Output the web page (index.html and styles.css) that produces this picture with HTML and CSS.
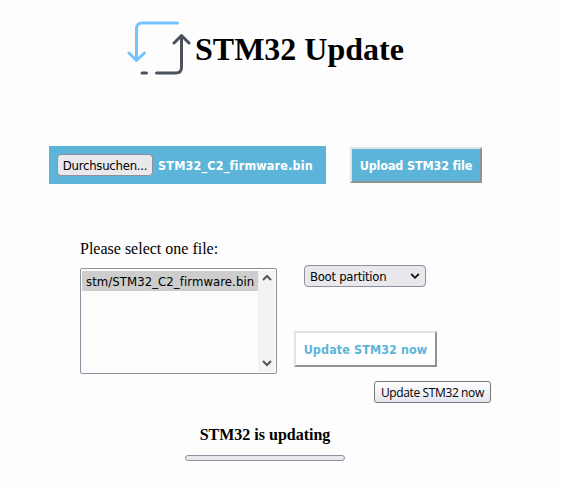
FILE: index.html
```html
<!DOCTYPE html>
<html lang="en">
<head>
<meta charset="utf-8">
<title>STM32 Update</title>
<link rel="stylesheet" href="styles.css">
</head>
<body>
<header class="header">
  <svg class="logo" width="64" height="56" viewBox="0 0 64 56" fill="none" stroke-width="3" stroke-linecap="round" stroke-linejoin="round">
    <path stroke="#74c3ff" d="M50.5 3H15Q9.500 3 9.500 9V40.500M2 33L9.500 40.500L17.500 33"/>
    <path stroke="#4b515d" d="M15 53H19.500M29.500 53H49Q54.500 53 54.500 47V15.500M47 23L54.500 15.500L62 23"/>
  </svg>
  <h1 class="title"><span>STM32 Update</span></h1>
</header>
<main>
  <section class="upload">
    <div class="picker">
      <button class="browse"><span>Durchsuchen...</span></button>
      <span class="filename">STM32_C2_firmware.bin</span>
    </div>
    <button class="action primary"><span>Upload STM32 file</span></button>
  </section>
  <section class="update">
    <div class="files">
      <div class="label"><span>Please select one file:</span></div>
      <div class="listbox">
        <div class="option"><span>stm/STM32_C2_firmware.bin</span></div>
        <div class="scrollbar">
          <svg width="10" height="7" viewBox="0 0 10 7"><path d="M1 6L5 2L9 6"/></svg>
          <svg width="10" height="7" viewBox="0 0 10 7"><path d="M1 1L5 5L9 1"/></svg>
        </div>
      </div>
    </div>
    <div class="controls">
      <div class="dropdown"><span>Boot partition</span>
        <svg width="10" height="7" viewBox="0 0 10 7"><path d="M1.200 1L5 4.800L8.800 1"/></svg>
      </div>
      <div class="anchor">
        <button class="action secondary"><span>Update STM32 now</span></button>
        <div class="tooltip"><span>Update STM32 now</span></div>
      </div>
    </div>
  </section>
  <section class="status">
    <div class="status-text"><span>STM32 is updating</span></div>
    <div class="progress"></div>
  </section>
</main>
</body>
</html>
```
FILE: styles.css
```css
* { box-sizing: border-box; }
body {
  margin: 0;
  height: 489px;
  overflow: hidden;
  background: #fdfdfd;
  color: #000;
  font: 16px/18px "Liberation Serif", serif;
}
button { margin: 0; padding: 0; color: inherit; }
span { white-space: nowrap; }
.header {
  display: flex;
  height: 146px;
  padding: 20px 0 0 127px;
}
.logo { flex: none; }
.title { margin: 11px 0 0 4px; font-size: 32px; line-height: 37px; }
.upload { display: flex; height: 38px; margin-left: 49px; gap: 24px; align-items: center; }
.picker {
  display: flex;
  align-items: center;
  width: 277px;
  height: 38px;
  padding-left: 8px;
  gap: 5px;
  background: #5cb5d9;
  color: #fff;
}
.browse, .option, .dropdown {
  font: 13px/18px "DejaVu Sans Condensed", "DejaVu Sans", sans-serif;
  color: #000;
}
.browse {
  width: 96px;
  height: 22px;
  padding-top: 1px;
  border: 1px solid #8f8f9d;
  border-radius: 4px;
  background: #e9e9ed;
  letter-spacing: -0.25px;
}
.filename, .action { font: bold 12.5px/18px "DejaVu Sans Condensed", "DejaVu Sans", sans-serif; }
.filename { padding-top: 1px; letter-spacing: 0.18px; }
.action { height: 36px; padding-top: 1px; border: 2px solid; border-color: #e3e3e3 #929292 #929292 #e3e3e3; }
.primary { width: 132px; background: #5cb5d9; color: #fff; letter-spacing: -0.15px; }
.update { display: flex; margin: 56px 0 0 80px; }
.files { width: 197px; }
.label { height: 28px; }
.listbox {
  display: flex;
  justify-content: space-between;
  height: 106px;
  padding: 2px 1px 1px;
  border: 1px solid #8f8f9d;
  border-radius: 2px;
}
.option { width: 176px; height: 20px; padding-left: 4px; background: #cdcdcd; line-height: 21px; letter-spacing: 0.07px; }
.scrollbar {
  display: flex;
  flex-direction: column;
  justify-content: space-between;
  align-items: center;
  width: 17px;
  padding: 3px 0 5px;
  background: #f3f3f3;
}
.scrollbar path { fill: none; stroke: #555; stroke-width: 2; }
.controls { padding: 25px 0 0 17px; }
.dropdown {
  display: flex;
  align-items: center;
  justify-content: space-between;
  width: 122px;
  height: 22px;
  margin-left: 10px;
  padding: 1px 5px 0 5px;
  border: 1px solid #8f8f9d;
  border-radius: 4px;
  background: #e9e9ed;
  letter-spacing: -0.28px;
}
.dropdown path { fill: none; stroke: #111; stroke-width: 1.8; }
.anchor { position: relative; margin-top: 44px; }
.secondary { display: block; width: 143px; background: #fff; color: #5cb5d9; letter-spacing: 0.08px; }
.tooltip {
  position: absolute;
  left: 80px;
  top: 50px;
  width: 117px;
  height: 22px;
  padding-left: 6px;
  border: 1px solid #767676;
  border-radius: 3px;
  background: linear-gradient(#fff, #e5e5f0);
  font: 12px/21px "Open Sans", "Noto Sans", sans-serif;
  letter-spacing: -0.38px;
}
.status { width: 160px; margin: 52px 0 0 185px; text-align: center; font-weight: bold; }
.status-text { height: 29px; }
.progress { height: 6px; border: 1px solid #8f8f9d; border-radius: 3px; background: #e9e9ed; }
```
